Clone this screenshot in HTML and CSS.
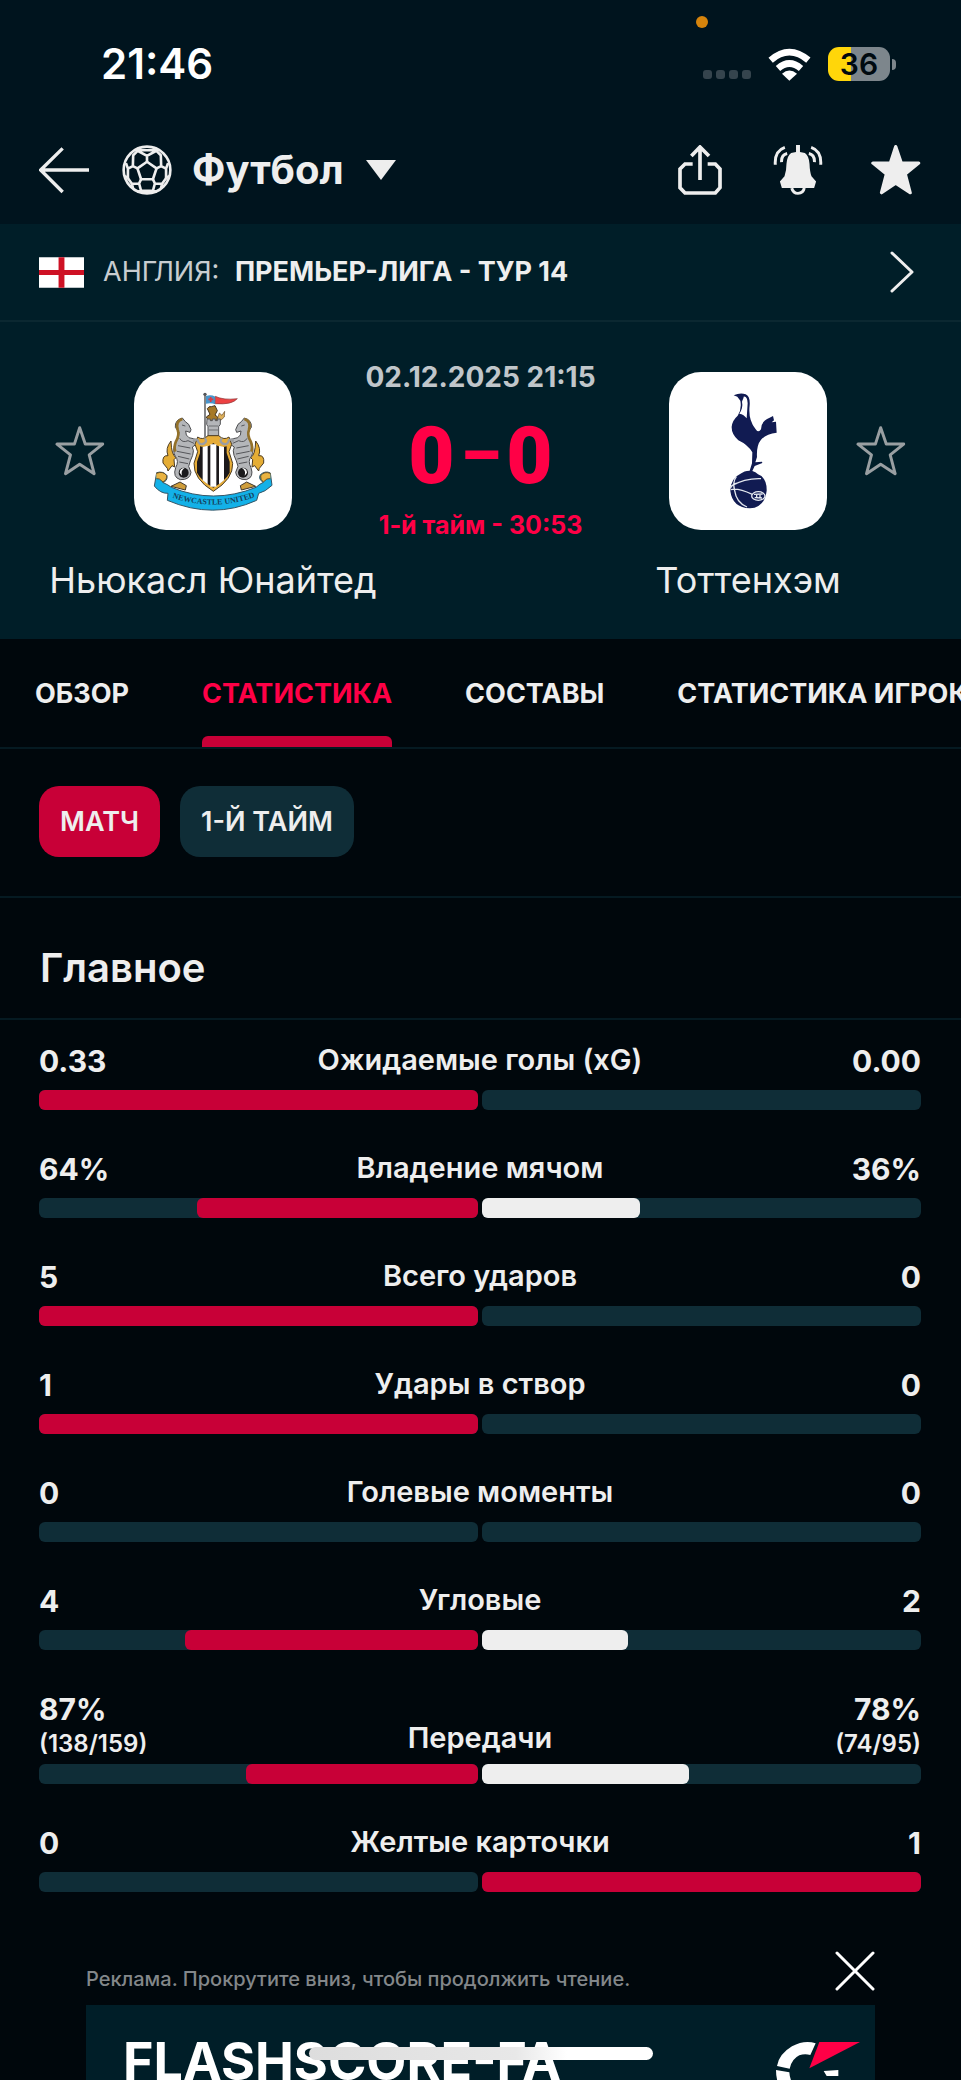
FILE: index.html
```html
<!DOCTYPE html>
<html lang="ru">
<head>
<meta charset="utf-8">
<meta name="viewport" content="width=device-width, initial-scale=1">
<title>Ньюкасл Юнайтед – Тоттенхэм</title>
<link rel="stylesheet" href="styles.css">
</head>
<body>
<div class="screen">
  <div class="status">
    <span class="status-time">21:46</span>
    <span class="mic-dot"></span>
    <div class="status-right">
      <span class="signal"><i></i><i></i><i></i><i></i></span>
      <svg class="wifi" viewBox="864 140 129 98" aria-hidden="true">
        <g fill="none" stroke="#fff" stroke-width="20"><path d="M872 176Q928 128 985 176"/><path d="M894 201Q928 171 963 201"/></g>
        <path d="M928 238L906 217Q928 197 951 217Z" fill="#fff"/>
      </svg>
      <span class="battery">36</span><span class="battery-nub"></span>
    </div>
  </div>

  <header class="topbar">
    <button class="icon-btn" aria-label="Назад">
      <svg class="i50" viewBox="117 435 150 150"><path d="M267 510H122M188 445L122 510L188 576" fill="none" stroke="#eee" stroke-width="10"/></svg>
    </button>
    <button class="sport">
      <svg class="i50" viewBox="366 433 152 152" aria-hidden="true">
        <g fill="none" stroke="#eee" stroke-width="8" stroke-linejoin="round">
          <circle cx="442" cy="509" r="71"/>
          <path d="M442 484L471 504L460 537H424L413 504Z"/>
          <path d="M442 484V466L411 449L423 441M442 466L473 449L461 441M411 449H473"/>
          <path d="M413 504L399 497L384 505L378 488M399 497L400 464L414 450M384 505V534L374 528"/>
          <path d="M471 504L485 497L500 505L506 488M485 497L484 464L470 450M500 505V534L510 528"/>
          <path d="M424 537L418 550L396 551L384 534M396 551L400 566M418 550L424 572L412 575"/>
          <path d="M460 537L466 550L488 551L500 534M488 551L484 566M466 550L460 572L472 575M424 572H460"/>
        </g>
      </svg>
      <span>Футбол</span>
      <svg class="caret" viewBox="0 0 30 20" aria-hidden="true"><path d="M0 0H30L15 20Z" fill="#eee"/></svg>
    </button>
    <div class="actions">
      <button class="icon-btn" aria-label="Поделиться">
        <svg class="i50" viewBox="583 434 150 150"><path d="M636 491H613L598 506V562L613 578H704L718 562V506L704 491H681M658 539V441M632 467L658 440L685 467" fill="none" stroke="#eee" stroke-width="11"/></svg>
      </button>
      <button class="icon-btn" aria-label="Уведомления">
        <svg class="i50" viewBox="879 433 150 152">
          <path d="M948 433H960V454L975 457Q987 465 989 490Q990 516 995 528L1009 544L1003 564H905L899 544L913 528Q919 512 919 490Q921 465 933 457L948 454Z" fill="#eee"/>
          <g fill="none" stroke="#eee" stroke-width="9"><path d="M935 564Q939 580 954 580Q970 580 973 564"/><path d="M885 493Q882 451 914 440M904 485Q903 463 921 459M1023 493Q1026 451 994 440M1004 485Q1005 463 987 459"/></g>
          <path d="M944 564H965Q963 571 954 571Q946 571 944 564Z" fill="#00141e"/>
        </svg>
      </button>
      <button class="icon-btn" aria-label="В избранное">
        <svg class="i50" viewBox="1175 433 150 152"><path d="M1249 438L1266 488H1319L1278 521L1293 578L1249 549L1206 578L1221 521L1180 488H1233Z" fill="#eee" stroke="#eee" stroke-width="10" stroke-linejoin="round"/></svg>
      </button>
    </div>
  </header>

  <a class="league" href="#">
    <svg class="flag" viewBox="0 0 46 31" aria-hidden="true"><path fill="#fff" d="M0 0H46V31H0Z"/><path fill="#ce1124" d="M20 0H26V31H20ZM0 13H46V18H0Z"/></svg>
    <span>АНГЛИЯ: <b>ПРЕМЬЕР-ЛИГА - ТУР 14</b></span>
    <svg class="chevron" viewBox="0 0 24 42" aria-hidden="true"><path d="M2 2L22 21L2 40" fill="none" stroke="#eee" stroke-width="3" stroke-linecap="round" stroke-linejoin="round"/></svg>
  </a>

  <section class="match">
    <div class="team">
      <button class="icon-btn" aria-label="Добавить Ньюкасл Юнайтед в избранное">
        <svg class="i50" viewBox="1175 433 150 152"><path d="M1249 438L1266 488H1319L1278 521L1293 578L1249 549L1206 578L1221 521L1180 488H1233Z" fill="none" stroke="#999fa2" stroke-width="9" stroke-linejoin="round"/></svg>
      </button>
      <svg class="crest" viewBox="-18 33 474 474" role="img" aria-label="Ньюкасл Юнайтед">
        <defs>
          <g id="seahorse">
            <path d="M93 240Q75 262 84 284Q66 282 69 306L82 322L84 330L96 314L104 318L102 296L108 290Q94 282 93 240Z" fill="#e5ad35" stroke="#4b3b24" stroke-width="3"/>
            <path d="M127 171Q104 177 106 199L117 214Q118 232 106 245Q96 270 106 286Q118 300 107 320Q97 349 121 356Q150 357 153 334L146 316Q150 300 158 283Q163 268 157 258Q172 250 178 240L160 233Q145 233 139 222L137 210L150 214L153 206L146 190L136 182Z" fill="#b4b6b9" stroke="#4a4b4e" stroke-width="3"/>
            <path d="M127 174Q106 180 113 206Q119 222 108 241Q101 258 106 272" fill="none" stroke="#93712a" stroke-width="8"/>
            <path d="M126 192L136 195M119 232Q127 247 144 239L162 247M114 254L151 261M111 271L152 279M114 286L148 294M118 303L144 308" fill="none" stroke="#55565a" stroke-width="3"/>
            <circle cx="131" cy="335" r="15" fill="#1b1b1d"/><path d="M119 335Q120 321 134 321Q121 329 126 344Z" fill="#fff"/>
          </g>
        </defs>
        <path d="M195 98V228" stroke="#46474a" stroke-width="4"/><circle cx="195" cy="100" r="5" fill="#55565a"/>
        <path d="M198 105Q213 100 226 107V130Q213 124 198 128Z" fill="#4796cc"/>
        <path d="M226 106Q250 118 292 113Q276 132 226 128Z" fill="#ed4142" stroke="#893c3e" stroke-width="2"/>
        <path d="M205 115H220M212 108V123" stroke="#d63b45" stroke-width="5"/>
        <path d="M202 143Q206 135 214 137L225 134L232 149L225 162L233 168L230 180H205L199 168L210 160Z" fill="#a67927" stroke="#44351f" stroke-width="3"/>
        <path d="M232 174L238 156L246 163L254 151L253 168L240 180Z" fill="#deb05a" stroke="#6a4c26" stroke-width="2"/>
        <path d="M201 174H211V179H217V174H226V179H233V174H241V190L236 197V225H204V197L200 190Z" fill="#b4b6b9" stroke="#55565a" stroke-width="3"/><path d="M206 195H235M206 207H234" stroke="#6c6e71" stroke-width="3"/>
        <use href="#seahorse"/><use href="#seahorse" transform="translate(440 0) scale(-1 1)"/>
        <path d="M173 228Q188 239 204 224H236Q252 239 267 228L275 250L267 272L278 307Q280 354 220 391Q160 354 162 307L173 272L165 250Z" fill="#e7ad38" stroke="#4f3f25" stroke-width="3"/>
        <path d="M180 256Q202 262 220 246Q238 262 260 256V276L269 302V335Q257 358 220 380Q183 358 171 335V302L180 276Z" fill="#1c191b"/>
        <path d="M188 258L203 254V370L188 358ZM211 250H229V377H211ZM237 254L252 258V358L237 370Z" fill="#fff"/>
        <path d="M163 243Q158 231 173 237Q177 255 193 247Q203 240 194 232M277 243Q282 231 267 237Q263 255 247 247Q237 240 246 232" fill="none" stroke="#9b9da1" stroke-width="7"/>
        <path d="M93 376L120 363L139 374L136 387ZM347 376L320 363L301 374L304 387Z" fill="#cf9d3a" stroke="#3f372c" stroke-width="3"/>
        <path d="M50 335Q70 329 81 344Q83 361 68 364Q86 372 94 379Q220 431 348 379Q360 368 370 364Q354 355 361 341Q376 328 391 336L396 373Q375 393 356 397L350 418Q220 477 82 418L84 397Q61 398 43 375Z" fill="#13b1e8" stroke="#365565" stroke-width="3"/>
        <path d="M49 337Q70 329 80 344Q81 357 69 363Q57 350 49 353M391 337Q373 330 362 344Q360 356 370 363Q381 350 391 353" fill="#e9b342" stroke="#684d25" stroke-width="3"/>
        <path id="ribbon" d="M91 408Q220 454 351 406" fill="none"/>
        <text class="crest-text"><textPath href="#ribbon" startOffset="50%" text-anchor="middle">NEWCASTLE UNITED</textPath></text>
      </svg>
      <span class="team-name">Ньюкасл Юнайтед</span>
    </div>
    <div class="result">
      <time class="date">02.12.2025 21:15</time>
      <div class="score"><span>0</span><span class="dash">–</span><span>0</span></div>
      <span class="clock">1-й тайм - 30:53</span>
    </div>
    <div class="team away">
      <svg class="crest" viewBox="42 33 474 474" role="img" aria-label="Тоттенхэм">
        <path d="M236 103Q256 94 272 100Q286 106 284 133Q279 176 301 203Q310 218 318 205Q319 179 344 170L354 165L357 178L350 184L363 182L365 215Q334 219 318 236Q304 253 306 288L301 304L321 302L322 306L299 315L292 330Q302 332 309 340Q336 350 335 389Q329 439 285 442Q232 440 226 390Q226 352 259 337Q266 330 284 329L291 307L292 274Q278 251 250 238Q229 220 230 197Q232 178 248 164Q261 145 256 119L247 107Z" fill="#111b52"/>
        <path d="M266 107Q277 105 278 127L275 172Q267 160 253 158Q265 140 261 122Z" fill="#fff"/>
        <path d="M259 107L266 110L262 116L254 113Z" fill="#111b52"/>
        <g fill="none" stroke="#e4e8ef" stroke-width="4"><path d="M228 375Q272 351 318 353M228 386Q247 380 292 400M244 347Q232 363 239 389Q244 425 276 438M226 381Q237 365 246 368"/><ellipse cx="310" cy="405" rx="20" ry="13"/><path d="M297 400L323 399M299 410L321 411M305 399V411M315 399V411"/></g>
      </svg>
      <button class="icon-btn" aria-label="Добавить Тоттенхэм в избранное">
        <svg class="i50" viewBox="1175 433 150 152"><path d="M1249 438L1266 488H1319L1278 521L1293 578L1249 549L1206 578L1221 521L1180 488H1233Z" fill="none" stroke="#999fa2" stroke-width="9" stroke-linejoin="round"/></svg>
      </button>
      <span class="team-name">Тоттенхэм</span>
    </div>
  </section>

  <nav class="tabs">
    <a href="#">ОБЗОР</a>
    <a href="#" class="active" aria-current="page">СТАТИСТИКА</a>
    <a href="#">СОСТАВЫ</a>
    <a href="#">СТАТИСТИКА ИГРОКОВ</a>
  </nav>

  <div class="chips">
    <button class="chip selected">МАТЧ</button>
    <button class="chip">1-Й ТАЙМ</button>
  </div>

  <h2 class="heading">Главное</h2>

  <div class="stats">
    <div class="stat"><div class="row"><span class="val">0.33</span><span class="label">Ожидаемые голы (xG)</span><span class="val">0.00</span></div>
      <div class="bars"><div class="track home"><i class="lead" style="width:100%"></i></div><div class="track"></div></div></div>
    <div class="stat"><div class="row"><span class="val">64%</span><span class="label">Владение мячом</span><span class="val">36%</span></div>
      <div class="bars"><div class="track home"><i class="lead" style="width:64%"></i></div><div class="track"><i style="width:36%"></i></div></div></div>
    <div class="stat"><div class="row"><span class="val">5</span><span class="label">Всего ударов</span><span class="val">0</span></div>
      <div class="bars"><div class="track home"><i class="lead" style="width:100%"></i></div><div class="track"></div></div></div>
    <div class="stat"><div class="row"><span class="val">1</span><span class="label">Удары в створ</span><span class="val">0</span></div>
      <div class="bars"><div class="track home"><i class="lead" style="width:100%"></i></div><div class="track"></div></div></div>
    <div class="stat"><div class="row"><span class="val">0</span><span class="label">Голевые моменты</span><span class="val">0</span></div>
      <div class="bars"><div class="track home"></div><div class="track"></div></div></div>
    <div class="stat"><div class="row"><span class="val">4</span><span class="label">Угловые</span><span class="val">2</span></div>
      <div class="bars"><div class="track home"><i class="lead" style="width:66.7%"></i></div><div class="track"><i style="width:33.3%"></i></div></div></div>
    <div class="stat detailed"><div class="row"><span class="val">87%<small>(138/159)</small></span><span class="label">Передачи</span><span class="val">78%<small>(74/95)</small></span></div>
      <div class="bars"><div class="track home"><i class="lead" style="width:52.8%"></i></div><div class="track"><i style="width:47.2%"></i></div></div></div>
    <div class="stat"><div class="row"><span class="val">0</span><span class="label">Желтые карточки</span><span class="val">1</span></div>
      <div class="bars"><div class="track home"></div><div class="track"><i class="lead" style="width:100%"></i></div></div></div>
  </div>

  <aside class="ad">
    <div class="ad-head">
      <span>Реклама. Прокрутите вниз, чтобы продолжить чтение.</span>
      <button class="icon-btn" aria-label="Закрыть рекламу">
        <svg class="close" viewBox="0 0 40 40"><path d="M2 2L38 38M38 2L2 38" stroke="#fff" stroke-width="3" stroke-linecap="round"/></svg>
      </button>
    </div>
    <div class="banner">
      <span>FLASHSCORE-FA</span>
      <svg class="fs-logo" viewBox="888 360 252 186" aria-hidden="true">
        <path d="M1007 370Q974 358 936 379Q897 402 891 438L929 446Q935 417 958 406Q974 400 991 405ZM888 450L928 457Q930 496 965 513L944 546Q888 516 888 450ZM1031 453L1075 450V468H1040Z" fill="#fff"/>
        <path d="M1018 366H1140L988 445Z" fill="#ff0046"/>
      </svg>
    </div>
  </aside>
  <div class="home-indicator"></div>
</div>
</body>
</html>
```
FILE: styles.css
```css
* { box-sizing: border-box; }

body {
  margin: 0;
  background: #00070c;
  color: #eee;
  font-family: Inter, "Noto Sans", sans-serif;
}

button {
  padding: 0;
  border: 0;
  background: none;
  color: inherit;
  font: inherit;
}

a { color: inherit; text-decoration: none; }
svg { display: block; flex: none; }

.screen {
  position: relative;
  display: flex;
  flex-direction: column;
  height: 100vh;
  overflow: hidden;
}

.screen > * { flex: none; }

/* status bar */
.status {
  position: relative;
  display: flex;
  align-items: center;
  justify-content: space-between;
  height: 128px;
  padding: 0 65px 0 101px;
  background: #00141e;
}

.status-time { font-size: 42px; font-weight: 600; line-height: 48px; color: #fff; }

.mic-dot {
  position: absolute;
  top: 16px;
  right: 253px;
  width: 12px;
  height: 12px;
  border-radius: 50%;
  background: #d6840c;
}

.status-right { display: flex; align-items: center; }
.signal { display: flex; gap: 4px; align-self: flex-end; margin: 0 17px 2px 0; }
.signal i { width: 9px; height: 9px; border-radius: 3px; background: #35444d; }
.wifi { width: 43px; height: 33px; margin-right: 17px; }

.battery {
  width: 62px;
  height: 34px;
  border-radius: 11px;
  background: linear-gradient(90deg, #ffd60a 37%, #7d868c 37%);
  color: #000a10;
  font-size: 30px;
  font-weight: 600;
  line-height: 34px;
  text-align: center;
}

.battery-nub { width: 4px; height: 11px; margin-left: 2px; border-radius: 0 4px 4px 0; background: #7d868c; }

/* top bar */
.topbar {
  display: flex;
  align-items: center;
  height: 96px;
  padding: 0 40px 12px 39px;
  background: #00141e;
}

.i50 { width: 50px; height: 50px; }
.sport { display: flex; align-items: center; margin-left: 33px; font-size: 40px; font-weight: 700; line-height: 48px; }
.sport span { margin: 0 22px 0 20px; }
.caret { width: 30px; height: 20px; }
.actions { display: flex; gap: 48px; margin-left: auto; }

/* league strip */
.league {
  display: flex;
  align-items: center;
  height: 98px;
  padding: 0 47px 0 39px;
  border-bottom: 2px solid #0b2831;
  background: #001e28;
  color: #c8cdd0;
  font-size: 27px;
  line-height: 32px;
}

.league b { margin-left: 8px; color: #eee; font-weight: 700; }
.flag { width: 45px; height: 31px; margin-right: 19px; }
.chevron { width: 24px; height: 42px; margin-left: auto; }

/* match summary */
.match {
  display: flex;
  justify-content: space-between;
  height: 317px;
  padding: 39px 55px 0;
  background: #001e28;
}

.team {
  display: grid;
  grid-template-columns: 50px 158px;
  grid-template-rows: 158px 48px;
  column-gap: 29px;
  row-gap: 26px;
  align-items: center;
  padding-top: 11px;
}

.team.away { grid-template-columns: 158px 50px; }
.crest { width: 158px; height: 158px; border-radius: 32px; background: #fff; }
.crest-text { fill: #16425c; font: bold 24px "Liberation Serif", serif; }
.team-name { grid-column: 2; justify-self: center; font-size: 36px; line-height: 48px; white-space: nowrap; }
.away .team-name { grid-column: 1; }

.result { display: flex; flex-direction: column; align-items: center; font-size: 28px; font-weight: 700; line-height: 32px; }
.date { color: #c0c6ca; }

.score {
  display: flex;
  align-items: center;
  gap: 6px;
  height: 116px;
  padding-top: 10px;
  color: #ff0046;
  font: 900 80px/80px Roboto, sans-serif;
}

.dash { font-size: 64px; }
.clock { color: #ff0046; font-size: 25px; }

/* tabs */
.tabs {
  display: flex;
  gap: 73px;
  height: 110px;
  padding-left: 35px;
  border-bottom: 2px solid #051a22;
  font-size: 27px;
  font-weight: 700;
  line-height: 110px;
  white-space: nowrap;
}

.tabs a { position: relative; height: 108px; }
.tabs .active { color: #ff0046; }
.tabs .active::after {
  content: "";
  position: absolute;
  right: 0;
  bottom: 0;
  left: 0;
  height: 11px;
  border-radius: 6px 6px 0 0;
  background: #c80037;
}

/* period filter */
.chips {
  display: flex;
  gap: 20px;
  height: 149px;
  padding: 37px 39px;
  border-bottom: 2px solid #051a22;
}

.chip {
  height: 71px;
  padding: 0 21px;
  border-radius: 20px;
  background: #0f2d37;
  font-size: 27px;
  font-weight: 600;
}

.chip.selected { background: #c80037; }

.heading {
  height: 122px;
  margin: 0;
  padding: 0 40px;
  border-bottom: 2px solid #051a22;
  font-size: 40px;
  font-weight: 600;
  line-height: 140px;
}

/* statistics */
.stats { display: flex; flex-direction: column; gap: 40px; padding: 22px 40px 0 39px; }
.stat { display: flex; flex-direction: column; gap: 8px; }
.row { display: grid; grid-template-columns: 1fr auto 1fr; align-items: start; }
.val { font-size: 30px; font-weight: 700; line-height: 38px; }
.val:last-child { text-align: right; }
.val small { display: block; font-size: 24px; font-weight: 600; line-height: 32px; }
.label { align-self: end; padding-bottom: 4px; font-size: 29px; font-weight: 600; line-height: 36px; }
.detailed { gap: 4px; }
.bars { display: grid; grid-template-columns: 1fr 1fr; gap: 4px; }
.track { display: flex; height: 20px; border-radius: 6px; background: #0f2d37; }
.track.home { justify-content: flex-end; }
.track i { border-radius: 6px; background: #eee; }
.track i.lead { background: #c80037; }

/* advertisement */
.ad { padding: 59px 86px 0; }
.ad-head { display: flex; align-items: center; justify-content: space-between; height: 40px; color: #83878a; font-size: 20px; font-weight: 500; line-height: 24px; }
.ad-head span { padding-top: 16px; }
.close { width: 40px; height: 40px; }

.banner {
  display: flex;
  justify-content: space-between;
  height: 140px;
  margin-top: 14px;
  padding: 35px 15px 0 37px;
  background: #001e28;
  color: #fff;
  font-size: 52px;
  font-weight: 700;
  line-height: 44px;
}

.fs-logo { width: 84px; height: 62px; }

.home-indicator {
  position: absolute;
  bottom: 20px;
  left: 50%;
  width: 344px;
  height: 13px;
  margin-left: -172px;
  border-radius: 7px;
  background: linear-gradient(90deg, #ddd, #e8e8e8 60%, #fff 75%);
}
```
